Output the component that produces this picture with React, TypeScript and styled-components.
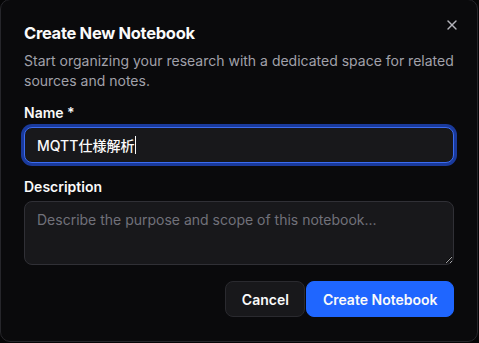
import React from "react";
import styled, { createGlobalStyle } from "styled-components";
import { X } from "lucide-react";

const GlobalStyle = createGlobalStyle`
  html, body {
    margin: 0;
    padding: 0;
    background: #050506;
  }
  * {
    box-sizing: border-box;
  }
`;

const Dialog = styled.div`
  position: relative;
  width: 478px;
  height: 343px;
  margin-top: -1px;
  padding: 0 23px;
  background: #0a0a0c;
  border: 1px solid #26262b;
  border-radius: 10px;
  font-family: Inter, "Noto Sans CJK JP", sans-serif;
  color: #fafafa;
  display: flex;
  flex-direction: column;
`;

const CloseButton = styled.button`
  position: absolute;
  top: 16px;
  right: 16px;
  width: 18px;
  height: 18px;
  padding: 0;
  border: none;
  background: transparent;
  color: #b4b4bb;
  display: flex;
  align-items: center;
  justify-content: center;
  cursor: pointer;
`;

const Header = styled.div`
  display: flex;
  flex-direction: column;
  gap: 4px;
  padding-top: 19px;
`;

const Title = styled.h2`
  margin: 0;
  font-size: 16.5px;
  line-height: 28px;
  font-weight: 700;
  letter-spacing: -0.3px;
`;

const Subtitle = styled.p`
  margin: 0;
  font-size: 14px;
  line-height: 20px;
  color: #a1a1aa;
`;

const Form = styled.div`
  display: flex;
  flex-direction: column;
  gap: 14px;
  margin-top: 12px;
`;

const Field = styled.div`
  display: flex;
  flex-direction: column;
  gap: 4px;
`;

const Label = styled.label`
  font-size: 14px;
  line-height: 20px;
  font-weight: 600;
`;

const TextBox = styled.div`
  height: 36px;
  display: flex;
  align-items: center;
  padding: 0 12px;
  background: #18181b;
  border: 1px solid #3b6cf0;
  border-radius: 8px;
  box-shadow: 0 0 0 3px #1a3a9c;
  font-size: 14px;
  font-weight: 500;
  color: #fafafa;
`;

const Caret = styled.span`
  display: inline-block;
  width: 1px;
  height: 18px;
  margin-left: 1px;
  background: #fafafa;
`;

const TextArea = styled.textarea`
  height: 64px;
  padding: 8px 12px;
  background: #18181b;
  border: 1px solid #303036;
  border-radius: 8px;
  font-family: inherit;
  font-size: 14px;
  line-height: 20px;
  color: #fafafa;
  resize: vertical;
  outline: none;

  &::placeholder {
    color: #71717a;
  }
`;

const Footer = styled.div`
  display: flex;
  justify-content: flex-end;
  gap: 1px;
  margin-top: 16px;
`;

const Button = styled.button<{ $primary?: boolean }>`
  height: 36px;
  padding: 0 15.5px;
  border-radius: 8px;
  border: 1px solid ${(p) => (p.$primary ? "#1f66ff" : "#2a2a2f")};
  background: ${(p) => (p.$primary ? "#1f66ff" : "#18181b")};
  color: #fafafa;
  font-family: inherit;
  font-size: 14px;
  font-weight: 600;
  cursor: pointer;
`;

const App = () => {
  return (
    <>
      <GlobalStyle />
      <Dialog>
        <CloseButton aria-label="Close">
          <X size={16} strokeWidth={2} />
        </CloseButton>
        <Header>
          <Title>Create New Notebook</Title>
          <Subtitle>
            Start organizing your research with a dedicated space for related
            sources and notes.
          </Subtitle>
        </Header>
        <Form>
          <Field>
            <Label>Name *</Label>
            <TextBox>
              MQTT仕様解析
              <Caret />
            </TextBox>
          </Field>
          <Field>
            <Label>Description</Label>
            <TextArea placeholder="Describe the purpose and scope of this notebook..." />
          </Field>
        </Form>
        <Footer>
          <Button>Cancel</Button>
          <Button $primary>Create Notebook</Button>
        </Footer>
      </Dialog>
    </>
  );
};

export default App;
